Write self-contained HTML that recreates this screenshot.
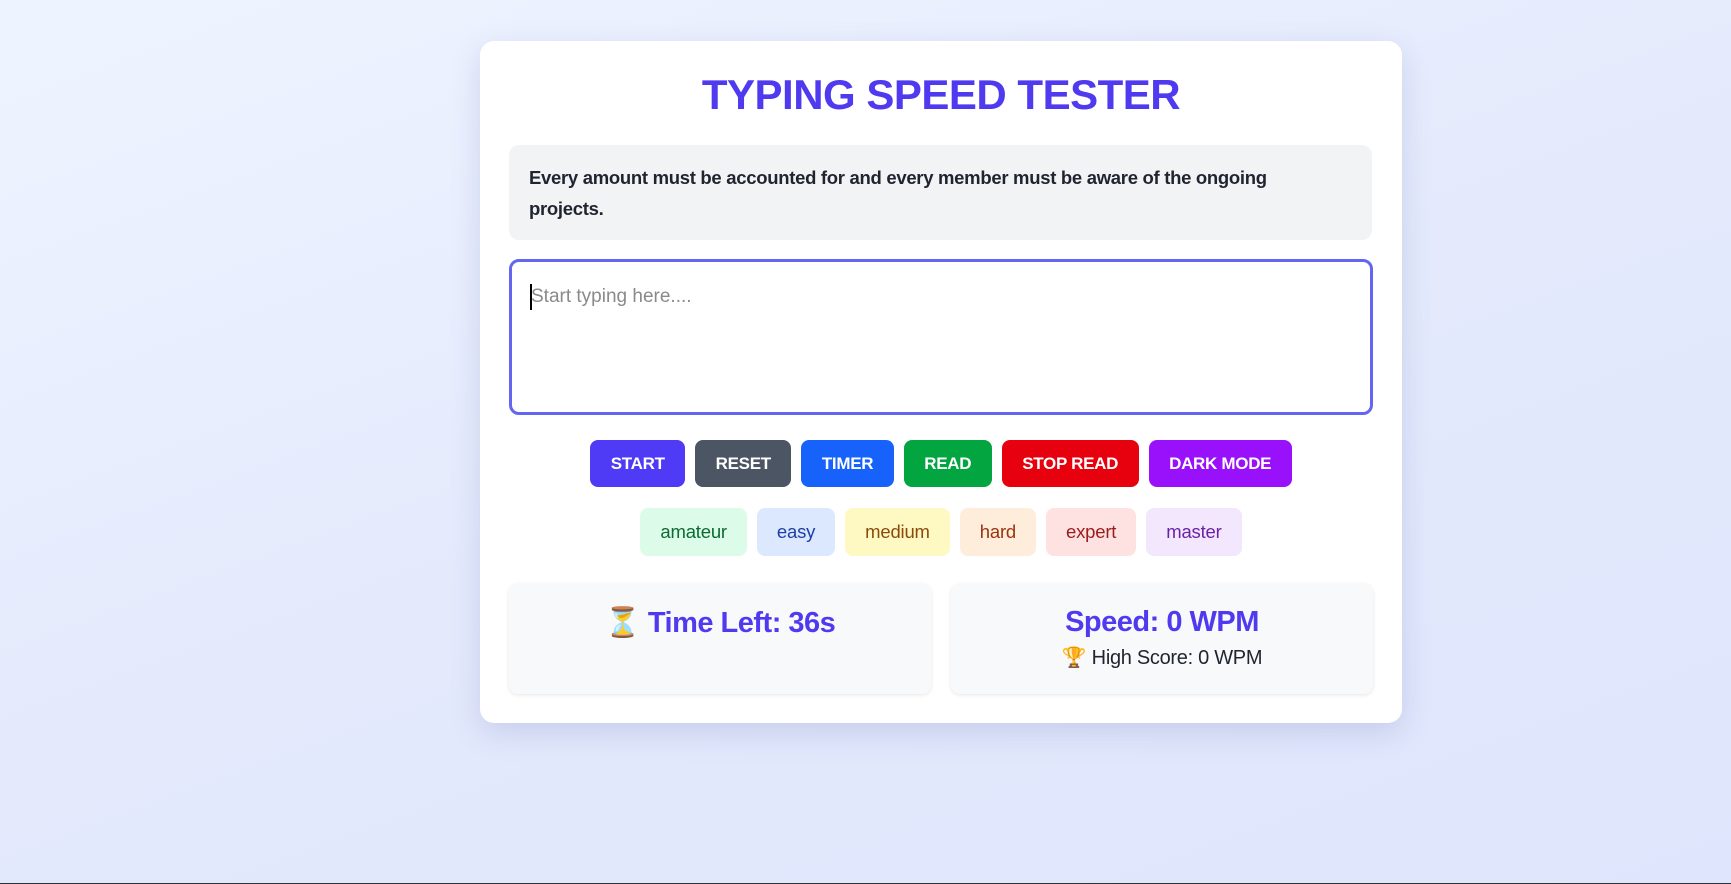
<!DOCTYPE html>
<html><head><meta charset="utf-8"><style>
*{box-sizing:border-box;margin:0;padding:0}
html,body{width:1731px;height:884px;overflow:hidden}
body{background:linear-gradient(160deg,#eef4ff 0%,#e4eafc 50%,#dfe5fc 100%);font-family:"Liberation Sans",sans-serif;position:relative}
.card{position:absolute;left:480px;top:41px;width:922px;height:682px;background:#fff;border-radius:14px;box-shadow:0 10px 30px rgba(80,90,160,.18)}
h1{position:absolute;top:30px;left:0;width:100%;text-align:center;color:#4f3af0;font-size:42px;line-height:48px;font-weight:bold;letter-spacing:-0.5px}
.quote{position:absolute;left:29px;top:104px;width:863px;height:95px;background:#f2f3f5;border-radius:10px;padding:17px 80px 17px 20px;font-size:18.5px;color:#1f2430;line-height:31px;font-weight:bold;letter-spacing:-0.3px}
.ta{position:absolute;left:29px;top:218px;width:864px;height:156px;border:3px solid #6366f1;border-radius:10px;padding:24px 19px;font-size:19px;color:#8a8a8a}
.ta:before{content:"";position:absolute;left:18px;top:22px;width:2px;height:26px;background:#000}
.btns{position:absolute;top:399px;left:0;width:100%;display:flex;justify-content:center;gap:10px}
.btns div{height:47px;line-height:47px;padding:0 20.5px;border-radius:8px;color:#fff;font-weight:bold;font-size:17px;letter-spacing:-0.3px}
.lv{position:absolute;top:467px;left:0;width:100%;display:flex;justify-content:center;gap:10px}
.lv div{height:48px;line-height:48px;padding:0 20px;border-radius:8px;font-size:18.5px;letter-spacing:-0.2px}
.st{position:absolute;top:543px;width:422px;height:110px;background:#f8f9fb;border-radius:9px;box-shadow:0 1px 4px rgba(0,0,0,.1);text-align:center}
.big{color:#4f3af0;font-weight:bold;font-size:29px;letter-spacing:-0.5px;margin-top:22px}
.sm{font-size:20px;color:#1f2430;margin-top:6px;letter-spacing:-0.3px}
.bl{position:absolute;left:0;bottom:0;width:100%;height:1px;background:#333}
</style></head><body>
<div class="card">
<h1>TYPING SPEED TESTER</h1>
<div class="quote">Every amount must be accounted for and every member must be aware of the ongoing projects.</div>
<div class="ta">Start typing here....</div>
<div class="btns">
<div style="background:#4f3af5">START</div>
<div style="background:#4b5563">RESET</div>
<div style="background:#1762fb">TIMER</div>
<div style="background:#02a540">READ</div>
<div style="background:#e7000e">STOP READ</div>
<div style="background:#9911fa">DARK MODE</div>
</div>
<div class="lv">
<div style="background:#dcfce9;color:#0c6a32">amateur</div>
<div style="background:#dbe8fe;color:#1e3ea8">easy</div>
<div style="background:#fef8c3;color:#8a4b0a">medium</div>
<div style="background:#ffeddb;color:#9a3410">hard</div>
<div style="background:#fee2e2;color:#9c1b1b">expert</div>
<div style="background:#f3e7fe;color:#6b21a8">master</div>
</div>
<div class="st" style="left:29px"><div class="big">⏳ Time Left: 36s</div></div>
<div class="st" style="left:471px"><div class="big">Speed: 0 WPM</div><div class="sm">🏆 High Score: 0 WPM</div></div>
</div>
<div class="bl"></div>
</body></html>
